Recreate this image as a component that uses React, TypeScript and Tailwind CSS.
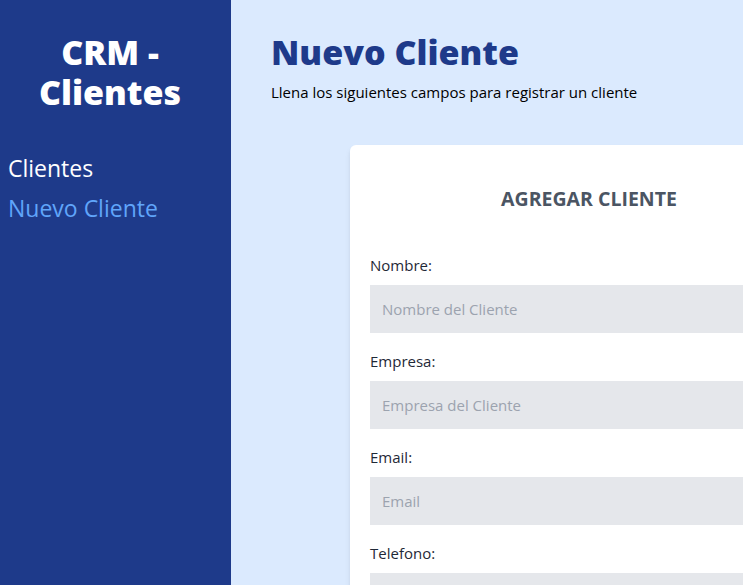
import React from "react";

const fields = [
  { label: "Nombre:", placeholder: "Nombre del Cliente" },
  { label: "Empresa:", placeholder: "Empresa del Cliente" },
  { label: "Email:", placeholder: "Email" },
  { label: "Telefono:", placeholder: "Telefono del Cliente" },
];

export default function App() {
  return (
    <div
      className="flex w-[743px] h-[585px] overflow-hidden"
      style={{ fontFamily: '"Open Sans", "Noto Sans", sans-serif' }}
    >
      <aside className="w-[231px] shrink-0 bg-[#1e3a8a] pt-8 pl-2">
        <h1 className="w-[204px] text-center text-[34px] leading-10 font-black text-white">
          CRM - Clientes
        </h1>
        <nav className="mt-10 flex flex-col gap-2">
          <a className="text-[23px] leading-8 text-white">Clientes</a>
          <a className="text-[23px] leading-8 text-[#60a5fa]">Nuevo Cliente</a>
        </nav>
      </aside>
      <main className="flex-1 bg-[#dbeafe] pt-8 pl-10 overflow-hidden">
        <h2 className="text-[34px] leading-10 font-black text-[#1e3a8a]">Nuevo Cliente</h2>
        <p className="mt-2 text-[15px] leading-6 text-black">
          Llena los siguientes campos para registrar un cliente
        </p>
        <div className="mt-[41px] ml-[79px] w-[478px] rounded-md bg-white px-5 py-10 shadow-md">
          <h3 className="mb-10 text-center text-[19.5px] leading-7 font-bold uppercase text-[#4b5563]">
            Agregar Cliente
          </h3>
          {fields.map((f) => (
            <div key={f.label} className="mb-4">
              <label className="block text-[15px] leading-6 text-[#1f2937]">{f.label}</label>
              <input
                className="mt-2 w-full bg-[#e5e7eb] p-3 text-[15px] leading-6 placeholder-[#9ca3af] outline-none"
                placeholder={f.placeholder}
              />
            </div>
          ))}
        </div>
      </main>
    </div>
  );
}
